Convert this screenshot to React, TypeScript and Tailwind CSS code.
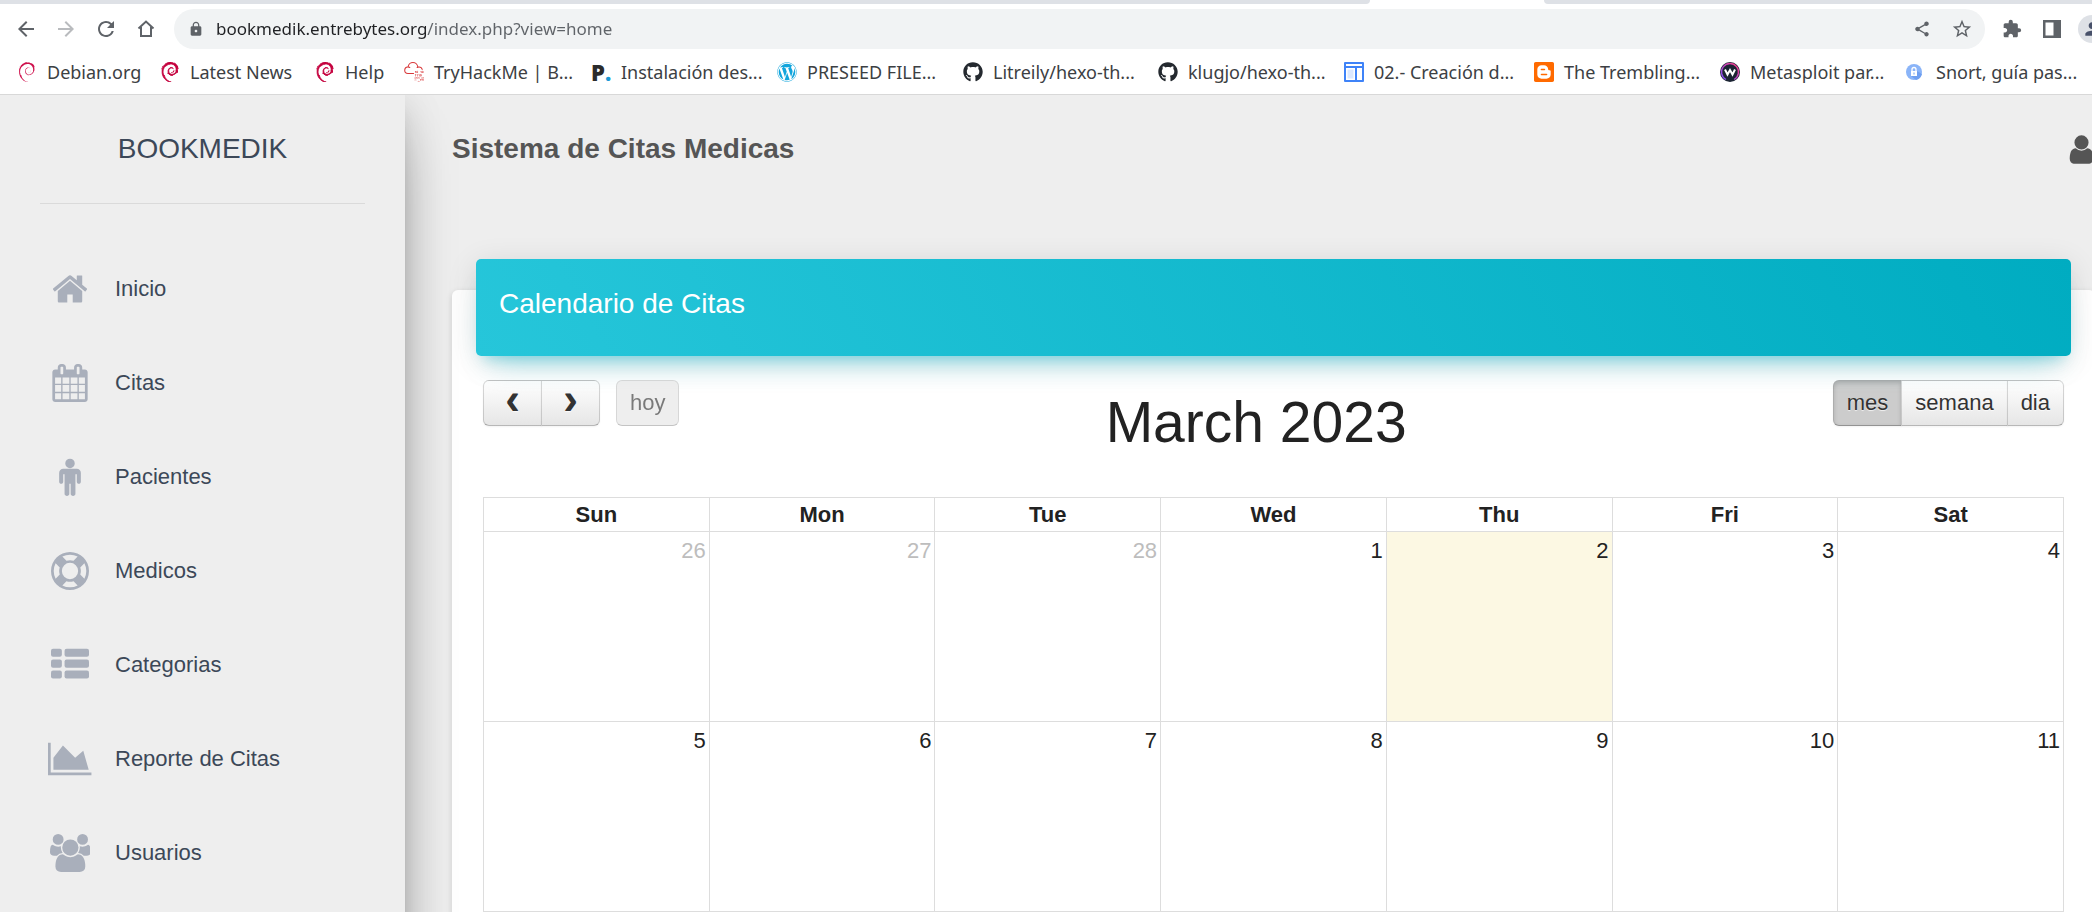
import type { ReactNode } from "react";
import { FaGithub, FaWordpress } from "react-icons/fa";
import { MdArrowBack, MdArrowForward, MdExtension, MdLock, MdPerson, MdRefresh, MdShare, MdStarBorder } from "react-icons/md";
import { SiBlogger, SiDebian, SiTryhackme } from "react-icons/si";

function HomeOutline() {
  return (
    <svg viewBox="0 0 20 20" className="size-5" fill="none" stroke="currentColor" strokeWidth="2">
      <path d="M2.5 9.5 10 2.5l7.5 7M5 8v9h10V8" />
    </svg>
  );
}

function SidePanelIcon() {
  return (
    <svg viewBox="0 0 20 20" className="size-5" fill="currentColor">
      <path fillRule="evenodd" d="M1 1h18v18H1zM3.500 3.500v13h8v-13z" />
    </svg>
  );
}

function LayoutLogo() {
  return (
    <svg viewBox="0 0 20 20" className="size-5 shrink-0">
      <rect width="20" height="20" rx="1" fill="#3f83f8" />
      <path fill="#fff" d="M2 2h16v2H2zM2 6h9v12H2zM13 6h5v12h-5z" />
      <path fill="#dbe8ff" d="M3.500 7.500h6v9h-6z" />
    </svg>
  );
}

function ConicLogo() {
  return (
    <svg viewBox="0 0 20 20" className="size-5 shrink-0">
      <defs>
        <linearGradient id="ring" x1="0" y1="1" x2="1" y2="0">
          <stop offset="0" stopColor="#7c4dff" />
          <stop offset="1" stopColor="#ff3d7f" />
        </linearGradient>
      </defs>
      <circle cx="10" cy="10" r="10" fill="#1b2433" />
      <path d="M6 17.500A8.500 8.500 0 1 1 14 17.500" fill="none" stroke="url(#ring)" strokeWidth="1.400" />
      <path d="m5 7.500 2.500 5L10 8l2.500 4.500 2.500-5" fill="none" stroke="#fff" strokeWidth="2" />
    </svg>
  );
}

function PadlockLogo() {
  return (
    <svg viewBox="0 0 20 20" className="size-5 shrink-0">
      <circle cx="8" cy="10" r="8" fill="#8ab4f8" />
      <path d="M11 9l5 3a8 8 0 0 1-6 6l-5-4z" fill="#6f9ff0" />
      <rect x="5" y="9" width="6" height="5" fill="#fff" />
      <path d="M6 9V7.500a2 2 0 0 1 4 0V9" fill="none" stroke="#fff" strokeWidth="1.300" />
      <rect x="7.500" y="10.500" width="1" height="2" fill="#6f9ff0" />
    </svg>
  );
}

const bookmarks: { label: string; icon: ReactNode }[] = [
  { label: "Debian.org", icon: <SiDebian className="size-5 shrink-0 text-[#ce0f4b]" /> },
  { label: "Latest News", icon: <SiDebian className="size-5 shrink-0 stroke-current stroke-1 text-[#c4003d]" /> },
  { label: "Help", icon: <SiDebian className="size-5 shrink-0 stroke-current stroke-1 text-[#c4003d]" /> },
  { label: "TryHackMe | B...", icon: <SiTryhackme className="size-5 shrink-0 text-[#d8383a]" /> },
  {
    label: "Instalación des...",
    icon: (
      <span className="w-5 shrink-0 font-['Open_Sans',sans-serif] text-[22px] leading-5 font-extrabold text-[#2b2b2b]">
        P<span className="text-[#1a9ad6]">.</span>
      </span>
    ),
  },
  { label: "PRESEED FILE...", icon: <FaWordpress className="size-5 shrink-0 text-[#12a5dc]" /> },
  { label: "Litreily/hexo-th...", icon: <FaGithub className="size-5 shrink-0 text-[#24292f]" /> },
  { label: "klugjo/hexo-th...", icon: <FaGithub className="size-5 shrink-0 text-[#24292f]" /> },
  { label: "02.- Creación d...", icon: <LayoutLogo /> },
  { label: "The Trembling...", icon: <SiBlogger className="size-5 shrink-0 text-[#ff6a00]" /> },
  { label: "Metasploit par...", icon: <ConicLogo /> },
  { label: "Snort, guía pas...", icon: <PadlockLogo /> },
];

function ToolButton({ label, children }: { label: string; children: ReactNode }) {
  return (
    <button aria-label={label} className="flex size-10 shrink-0 items-center justify-center">
      {children}
    </button>
  );
}

function BrowserBar() {
  return (
    <header className="shrink-0 border-b border-[#d8d8d8] bg-white font-['Noto_Sans',sans-serif] text-[#5f6368]">
      <div className="grid h-1 grid-cols-[1370fr_174px_548fr]">
        <div className="rounded-br bg-[#dee1e6]" />
        <div />
        <div className="rounded-bl bg-[#dee1e6]" />
      </div>
      <div className="mt-[5px] flex items-center pl-1.5">
        <ToolButton label="Back"><MdArrowBack className="size-6" /></ToolButton>
        <ToolButton label="Forward"><MdArrowForward className="size-6 text-[#b9bbbe]" /></ToolButton>
        <ToolButton label="Reload"><MdRefresh className="size-6" /></ToolButton>
        <ToolButton label="Home"><HomeOutline /></ToolButton>
        <div className="ml-2 flex h-10 min-w-0 flex-1 items-center rounded-full bg-[#f1f3f4] pr-[3px] pl-3.5">
          <MdLock className="size-4" />
          <input
            aria-label="Address"
            defaultValue="bookmedik.entrebytes.org/index.php?view=home"
            className="ml-3 min-w-0 flex-1 bg-[linear-gradient(90deg,#202124_211px,#5f6368_211px)] bg-clip-text text-[17px] leading-6 text-transparent outline-none"
          />
          <ToolButton label="Share"><MdShare className="size-[18px]" /></ToolButton>
          <ToolButton label="Bookmark"><MdStarBorder className="size-[22px]" /></ToolButton>
        </div>
        <div className="-mr-5 ml-[7px] flex items-center">
          <ToolButton label="Extensions"><MdExtension className="size-5" /></ToolButton>
          <ToolButton label="Side panel"><SidePanelIcon /></ToolButton>
          <ToolButton label="Profile">
            <span className="flex size-7 items-center justify-center rounded-full bg-[#dee1e6] text-[#48516a]">
              <MdPerson className="size-5" />
            </span>
          </ToolButton>
        </div>
      </div>
      <nav className="grid h-[45px] grid-cols-[143px_155px_89px_187px_186px_186px_195px_186px_190px_186px_186px_1fr] items-center pl-[17px]">
        {bookmarks.map((b) => (
          <a key={b.label} href="#" className="flex items-center gap-2.5 text-[18px] leading-6 whitespace-nowrap text-[#3c4043]">
            {b.icon}
            {b.label}
          </a>
        ))}
      </nav>
    </header>
  );
}

const menu: { label: string; width?: number; icon: ReactNode }[] = [
  {
    label: "Inicio",
    icon: (
      <path d="M1472 992v480q0 26-19 45t-45 19h-384v-384h-256v384h-384q-26 0-45-19t-19-45v-480q0-1 .5-3t.5-3l575-474 575 474q1 2 1 6zm223-69l-62 74q-8 9-21 11h-3q-13 0-21-7l-692-577-692 577q-12 8-24 7-13-2-21-11l-62-74q-8-10-7-23.500t11-21.500l719-599q32-26 76-26t76 26l244 204v-195q0-14 9-23t23-9h192q14 0 23 9t9 23v408l219 182q10 8 11 21.500t-7 23.500z" />
    ),
  },
  {
    label: "Citas",
    icon: (
      <path d="M192 1664h288v-288h-288v288zm352 0h320v-288h-320v288zm-352-352h288v-320h-288v320zm352 0h320v-320h-320v320zm-352-384h288v-288h-288v288zm736 736h320v-288h-320v288zm-384-736h320v-288h-320v288zm768 736h288v-288h-288v288zm-384-352h320v-320h-320v320zm-352-864v-288q0-13-9.500-22.500t-22.500-9.500h-64q-13 0-22.500 9.500t-9.500 22.500v288q0 13 9.500 22.500t22.500 9.500h64q13 0 22.500-9.500t9.500-22.500zm736 864h288v-320h-288v320zm-384-384h320v-288h-320v288zm384 0h288v-288h-288v288zm32-480v-288q0-13-9.500-22.500t-22.500-9.500h-64q-13 0-22.500 9.500t-9.500 22.500v288q0 13 9.500 22.500t22.500 9.500h64q13 0 22.500-9.500t9.500-22.500zm384-64v1280q0 52-38 90t-90 38h-1408q-52 0-90-38t-38-90v-1280q0-52 38-90t90-38h128v-96q0-66 47-113t113-47h64q66 0 113 47t47 113v96h384v-96q0-66 47-113t113-47h64q66 0 113 47t47 113v96h128q52 0 90 38t38 90z" />
    ),
  },
  {
    label: "Pacientes",
    icon: (
      <path d="M1408 704v416q0 40-28 68t-68 28-68-28-28-68v-352h-64v912q0 46-33 79t-79 33-79-33-33-79v-464h-64v464q0 46-33 79t-79 33-79-33-33-79v-912h-64v352q0 40-28 68t-68 28-68-28-28-68v-416q0-80 56-136t136-56h640q80 0 136 56t56 136zm-288-448q0 93-65.500 158.500t-158.500 65.500-158.500-65.500-65.500-158.500 65.500-158.500 158.500-65.500 158.500 65.500 65.500 158.500z" />
    ),
  },
  {
    label: "Medicos",
    icon: (
      <path d="M896 0q182 0 348 71t286 191 191 286 71 348-71 348-191 286-286 191-348 71-348-71-286-191-191-286-71-348 71-348 191-286 286-191 348-71zm0 128q-190 0-361 90l194 194q82-28 167-28t167 28l194-194q-171-90-361-90zm-678 1129l194-194q-28-82-28-167t28-167l-194-194q-90 171-90 361t90 361zm678 407q190 0 361-90l-194-194q-82 28-167 28t-167-28l-194 194q171 90 361 90zm0-384q159 0 271.500-112.500t112.500-271.500-112.500-271.500-271.500-112.500-271.500 112.500-112.500 271.500 112.500 271.500 271.500 112.500zm484-217l194 194q90-171 90-361t-90-361l-194 194q28 82 28 167t-28 167z" />
    ),
  },
  {
    label: "Categorias",
    icon: (
      <>
        {[128, 640, 1152].map((y) => (
          <g key={y}>
            <rect x="0" y={y} width="512" height="384" rx="96" />
            <rect x="640" y={y} width="1152" height="384" rx="96" />
          </g>
        ))}
      </>
    ),
  },
  {
    label: "Reporte de Citas",
    width: 2048,
    icon: <path d="M2048 1536v128h-2048v-1536h128v1408h1920zm-384-1024l256 896h-1664v-576l448-576 576 576z" />,
  },
  {
    label: "Usuarios",
    width: 1920,
    icon: (
      <path d="M593 896q-162 5-265 128h-134q-82 0-138-40.500t-56-118.500q0-353 124-353 6 0 43.500 21t97.500 42.500 119 21.500q67 0 133-23-5 37-5 66 0 139 81 256zm1071 637q0 120-73 189.500t-194 69.500h-874q-121 0-194-69.500t-73-189.500q0-53 3.500-103.500t14-109 26.500-108.500 43-97.500 62-81 85.500-53.500 111.500-20q10 0 43 21.500t73 48 107 48 135 21.500 135-21.500 107-48 73-48 43-21.500q61 0 111.500 20t85.500 53.500 62 81 43 97.500 26.500 108.500 14 109 3.500 103.500zm-1024-1277q0 106-75 181t-181 75-181-75-75-181 75-181 181-75 181 75 75 181zm704 384q0 159-112.500 271.500t-271.500 112.500-271.500-112.500-112.500-271.500 112.500-271.500 271.500-112.500 271.500 112.500 112.500 271.500zm576 225q0 78-56 118.500t-138 40.500h-134q-103-123-265-128 81-117 81-256 0-29-5-66 66 23 133 23 59 0 119-21.500t97.500-42.500 43.500-21q124 0 124 353zm-128-609q0 106-75 181t-181 75-181-75-75-181 75-181 181-75 181 75 75 181z" />
    ),
  },
];

function Sidebar() {
  return (
    <aside className="relative z-10 w-[405px] shrink-0 bg-[#eee] shadow-[0_25px_60px_-19px_rgba(0,0,0,0.48),0_6px_39px_0_rgba(0,0,0,0.12),0_12px_16px_-8px_rgba(0,0,0,0.16)]">
      <div className="mx-10 flex h-[109px] items-center justify-center border-b border-[#dadada]">
        <a href="#" className="text-[28px] leading-[42px] text-[#3c4858]">BOOKMEDIK</a>
      </div>
      <nav className="flex flex-col gap-5 px-[47px] pt-12 pb-5">
        {menu.map((item) => (
          <a key={item.label} href="#" className="flex h-[74px] items-center gap-[22px] text-[22px] leading-8 text-[#3c4858]">
            <span className="flex w-[46px] justify-center">
              <svg viewBox={`0 0 ${item.width ?? 1792} 1792`} className="h-[38px] w-auto" fill="#a9afbb">
                {item.icon}
              </svg>
            </span>
            {item.label}
          </a>
        ))}
      </nav>
    </aside>
  );
}

const days = ["Sun", "Mon", "Tue", "Wed", "Thu", "Fri", "Sat"];
const weeks = [
  [26, 27, 28, 1, 2, 3, 4],
  [5, 6, 7, 8, 9, 10, 11],
  [null, null, null, null, null, null, null],
];

const buttonBase = "h-[46px] border border-[rgba(0,0,0,0.15)] border-b-[rgba(0,0,0,0.28)] text-[22px] leading-8";
const raised = "bg-linear-to-b from-white to-[#e6e6e6] text-[#333] shadow-[0_1px_2px_rgba(0,0,0,0.05)] [text-shadow:0_1px_1px_rgba(255,255,255,0.75)]";

function Toolbar() {
  return (
    <div className="flex items-start justify-between">
      <div className="flex gap-4">
        <div className="flex">
          <button aria-label="Previous" className={`${buttonBase} ${raised} w-[59px] rounded-l-md`}>
            <span className="flex h-8 items-center justify-center pb-2 text-[44px] leading-6 font-bold">‹</span>
          </button>
          <button aria-label="Next" className={`${buttonBase} ${raised} -ml-px w-[59px] rounded-r-md`}>
            <span className="flex h-8 items-center justify-center pb-2 text-[44px] leading-6 font-bold">›</span>
          </button>
        </div>
        <button disabled className={`${buttonBase} rounded-md bg-[#e6e6e6] px-[13px] text-[#333] opacity-65`}>hoy</button>
      </div>
      <h2 className="text-[57px] leading-[84px] text-[#222]">March 2023</h2>
      <div className="flex">
        <button className={`${buttonBase} rounded-l-md bg-[#ccc] px-[13px] text-[#333] shadow-[inset_0_2px_4px_rgba(0,0,0,0.15),0_1px_2px_rgba(0,0,0,0.05)] [text-shadow:0_1px_1px_rgba(255,255,255,0.75)]`}>
          mes
        </button>
        <button className={`${buttonBase} ${raised} -ml-px px-[13px]`}>semana</button>
        <button className={`${buttonBase} ${raised} -ml-px rounded-r-md px-[13px]`}>dia</button>
      </div>
    </div>
  );
}

function Calendar() {
  return (
    <table className="mt-[33px] w-full table-fixed border-collapse text-[22px] leading-[33px] text-[#222]">
      <thead>
        <tr>
          {days.map((d) => (
            <th key={d} className="border border-[#ddd] p-0 text-center font-bold">{d}</th>
          ))}
        </tr>
      </thead>
      <tbody>
        {weeks.map((week, w) => (
          <tr key={w} className="h-[190px]">
            {week.map((d, i) => (
              <td
                key={days[i]}
                className={`border border-[#ddd] px-[3px] pt-0.5 text-right align-top ${w === 0 && i < 3 ? "text-[#bdbdbd]" : ""} ${d === 2 ? "bg-[#fcf8e3]" : ""}`}
              >
                {d}
              </td>
            ))}
          </tr>
        ))}
      </tbody>
    </table>
  );
}

export default function App() {
  return (
    <div className="flex h-screen flex-col overflow-hidden bg-[#eee] font-['Liberation_Sans',Arial,sans-serif]">
      <BrowserBar />
      <div className="min-h-0 flex-1 overflow-hidden">
        <div className="flex">
          <Sidebar />
          <main className="-mr-[3px] min-w-0 flex-1 pb-10 pl-[47px]">
            <div className="flex h-[108px] items-center justify-between">
              <h1 className="text-[28px] leading-[42px] font-bold text-[#555]">Sistema de Citas Medicas</h1>
              <button aria-label="Usuario" className="-mr-[3px]">
                <svg viewBox="0 0 1792 1792" className="size-[33px]" fill="#555">
                  <path d="M1536 1399q0 109-62.500 187t-150.500 78h-854q-88 0-150.500-78t-62.500-187q0-85 8.500-160.500t31.500-152 58.500-131 94-89 134.500-34.500q131 128 313 128t313-128q76 0 134.500 34.500t94 89 58.500 131 31.500 152 8.500 160.500zm-256-887q0 159-112.500 271.500t-271.500 112.500-271.500-112.500-112.500-271.500 112.500-271.500 271.500-112.500 271.500 112.500 112.500 271.500z" />
                </svg>
              </button>
            </div>
            <section className="mt-[87px] rounded-md bg-white px-6 pb-6 shadow-[0_2px_6px_rgba(0,0,0,0.14)]">
              <div className="relative -top-[31px] -mb-[31px] rounded-[5px] bg-[linear-gradient(60deg,#26c6da,#00acc1)] px-[23px] pt-6 pb-[31px] shadow-[0_19px_31px_-16px_rgba(0,188,212,0.4),0_6px_31px_0_rgba(0,0,0,0.12),0_11px_12px_-8px_rgba(0,188,212,0.25)]">
                <h3 className="text-[28px] leading-[42px] text-white">Calendario de Citas</h3>
              </div>
              <div className="px-[7px] pt-6">
                <Toolbar />
                <Calendar />
              </div>
            </section>
          </main>
        </div>
      </div>
    </div>
  );
}
